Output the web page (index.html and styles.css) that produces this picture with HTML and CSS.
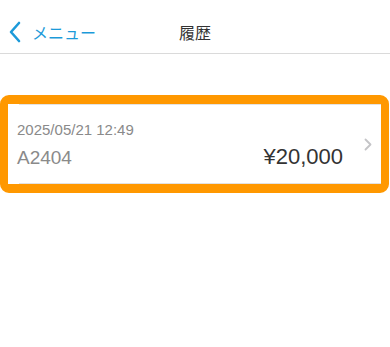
FILE: index.html
```html
<!DOCTYPE html>
<html lang="ja">

<head>
  <meta charset="UTF-8">
  <meta name="viewport" content="width=device-width, initial-scale=1.0">
  <title>履歴</title>
  <link rel="stylesheet" href="styles.css">
</head>

<body>
  <div class="header">
    <a class="back" href="#">
      <svg width="14" height="22" viewBox="0 0 14 22">
        <polyline points="11,2 3,11 11,20" fill="none" stroke="#1c9ad9" stroke-width="2.6" stroke-linecap="round" stroke-linejoin="round" />
      </svg>
      <span>メニュー</span>
    </a>
    <div class="title">履歴</div>
    <div></div>
  </div>

  <div class="list">
    <div class="row selected">
      <div class="cell">
        <div class="main">
          <div class="date">2025/05/21 12:49</div>
          <div class="line">
            <span class="code">A2404</span>
            <span class="amount">¥20,000</span>
          </div>
        </div>
        <svg class="chev" width="8" height="13" viewBox="0 0 8 13">
          <polyline points="1.5,1.5 6.5,6.5 1.5,11.5" fill="none" stroke="#c4c4c7" stroke-width="1.8" stroke-linecap="round" stroke-linejoin="round" />
        </svg>
      </div>
    </div>
  </div>
</body>

</html>
```

FILE: styles.css
```css
body {
  margin: 0;
  background: #fff;
  font-family: "Liberation Sans", "Noto Sans CJK JP", sans-serif;
}

.header {
  display: grid;
  grid-template-columns: 1fr auto 1fr;
  align-items: center;
  height: 43px;
  padding-top: 10px;
  border-bottom: 1px solid #dadada;
}

.back {
  display: flex;
  align-items: center;
  gap: 10px;
  padding-left: 8px;
  color: #1c9ad9;
  text-decoration: none;
  font-size: 16px;
  font-family: "Noto Sans CJK JP", sans-serif;
}

.back svg {
  display: block;
}

.title {
  font-size: 16px;
  color: #333;
  font-family: "Noto Sans CJK JP", sans-serif;
}

.list {
  margin-top: 41px;
}

.row {
  box-sizing: border-box;
  width: 389px;
  height: 98px;
}

.row.selected {
  border: 8px solid #ff9800;
  border-top-width: 9px;
  border-bottom-width: 9px;
  border-radius: 9px;
}

.cell {
  box-sizing: border-box;
  height: 80px;
  margin-left: 11px;
  display: flex;
  align-items: center;
  padding: 0 9px 0 0;
  border-top: 1px solid #e2e2e2;
  border-bottom: 1px solid #e2e2e2;
}

.main {
  flex: 1;
  padding-top: 2px;
  margin-left: -2px;
  margin-right: 21px;
}

.date {
  font-size: 15px;
  color: #8a8a8a;
}

.line {
  display: flex;
  align-items: baseline;
  justify-content: space-between;
  margin-top: 6px;
}

.code {
  font-size: 19px;
  color: #8a8a8a;
}

.amount {
  font-size: 22px;
  color: #333;
}

.chev {
  display: block;
}
```
